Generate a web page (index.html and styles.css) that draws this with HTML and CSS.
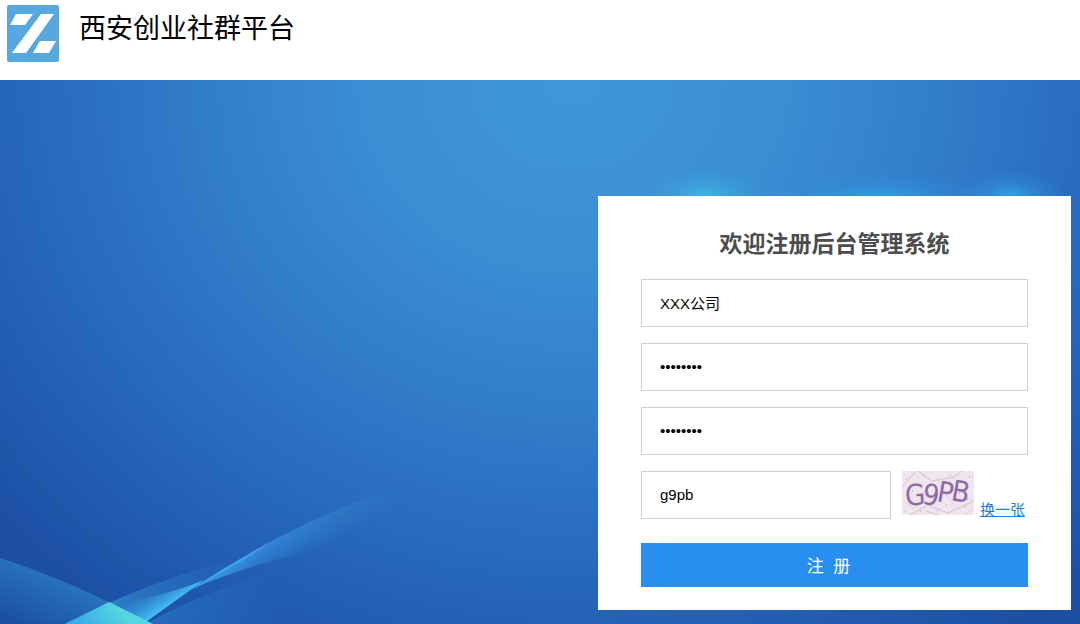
FILE: index.html
```html
<!DOCTYPE html>
<html lang="zh-CN">
<head>
    <meta charset="UTF-8">
    <meta name="viewport" content="width=device-width, initial-scale=1.0">
    <title>西安创业社群平台</title>
    <link rel="stylesheet" href="styles.css">
</head>
<body>

    <!-- Header -->
    <header class="header">
        <svg class="logo" viewBox="0 0 52 57" aria-hidden="true">
            <rect width="52" height="57" rx="2" fill="#58a8e0"/>
            <path d="M9 9H26L18 20H3Z" fill="#fff"/>
            <path d="M34 9H47L19 48H5Z" fill="#fff"/>
            <path d="M33 36H49L42 48H26Z" fill="#fff"/>
        </svg>
        <h1 class="site-name">西安创业社群平台</h1>
    </header>

    <main class="main">
        <!-- Light beams behind the form -->
        <svg class="beams" viewBox="0 0 1080 544" preserveAspectRatio="xMinYMax slice" aria-hidden="true">
            <defs>
                <linearGradient id="left" gradientUnits="userSpaceOnUse" x1="65" y1="502" x2="42" y2="556">
                    <stop offset="0" stop-color="#3596d4" stop-opacity=".5"/>
                    <stop offset="1" stop-color="#3596d4" stop-opacity="0"/>
                </linearGradient>
                <linearGradient id="arc" gradientUnits="userSpaceOnUse" x1="90" y1="530" x2="240" y2="478">
                    <stop offset="0" stop-color="#38a4e2" stop-opacity=".65"/>
                    <stop offset="1" stop-color="#3588d8" stop-opacity="0"/>
                </linearGradient>
                <linearGradient id="ribbon" gradientUnits="userSpaceOnUse" x1="195" y1="507" x2="415" y2="405">
                    <stop offset="0" stop-color="#45b5f8"/>
                    <stop offset=".3" stop-color="#3790e4" stop-opacity=".9"/>
                    <stop offset=".7" stop-color="#3488d0" stop-opacity=".5"/>
                    <stop offset="1" stop-color="#3488d0" stop-opacity="0"/>
                </linearGradient>
                <linearGradient id="fade" gradientUnits="userSpaceOnUse" x1="275" y1="458" x2="289" y2="486">
                    <stop offset="0" stop-color="#fff"/>
                    <stop offset="1" stop-color="#000"/>
                </linearGradient>
                <mask id="ribbonMask" maskUnits="userSpaceOnUse" x="0" y="300" width="500" height="244">
                    <rect y="300" width="500" height="244" fill="url(#fade)"/>
                </mask>
                <linearGradient id="tail" gradientUnits="userSpaceOnUse" x1="165" y1="530" x2="150" y2="508">
                    <stop offset="0" stop-color="#45c4f8"/>
                    <stop offset="1" stop-color="#3aa8e8" stop-opacity="0"/>
                </linearGradient>
                <linearGradient id="lower" gradientUnits="userSpaceOnUse" x1="150" y1="540" x2="275" y2="500">
                    <stop offset="0" stop-color="#2f86d0" stop-opacity=".5"/>
                    <stop offset="1" stop-color="#2f86d0" stop-opacity="0"/>
                </linearGradient>
                <linearGradient id="cross" gradientUnits="userSpaceOnUse" x1="85" y1="544" x2="115" y2="522">
                    <stop offset="0" stop-color="#3ab0e6"/>
                    <stop offset="1" stop-color="#56d6e0"/>
                </linearGradient>
                <radialGradient id="glow">
                    <stop offset="0" stop-color="#3cb8e4"/>
                    <stop offset=".5" stop-color="#3cb0e2" stop-opacity=".4"/>
                    <stop offset="1" stop-color="#3cb0e2" stop-opacity="0"/>
                </radialGradient>
                <radialGradient id="glowBlue">
                    <stop offset="0" stop-color="#2fa2e4"/>
                    <stop offset=".5" stop-color="#2f98e0" stop-opacity=".4"/>
                    <stop offset="1" stop-color="#2f94e0" stop-opacity="0"/>
                </radialGradient>
            </defs>
            <path d="M0 478Q55 496 109 522L153 544H0Z" fill="url(#left)"/>
            <path d="M65 544Q150 500 240 478L195 507L143 544Z" fill="url(#arc)"/>
            <path d="M146 544Q200 512 290 488L300 544Z" fill="url(#lower)"/>
            <path d="M190 510Q310 430 430 398V450Q280 470 190 510Z" fill="url(#ribbon)" mask="url(#ribbonMask)"/>
            <path d="M193 508Q230 484 270 462Q240 484 193 508Z" fill="#45b0f6" opacity=".6"/>
            <path d="M109 522Q155 520 204 500L193 508L143 544Z" fill="url(#tail)"/>
            <path d="M65 544L109 522L153 544Z" fill="url(#cross)"/>
            <ellipse cx="705" cy="116" rx="60" ry="26" fill="url(#glow)"/>
            <ellipse cx="880" cy="118" rx="110" ry="26" fill="url(#glowBlue)"/>
            <ellipse cx="1010" cy="116" rx="55" ry="26" fill="url(#glowBlue)"/>
        </svg>

        <!-- Register form -->
        <form class="card">
            <h2 class="title">欢迎注册后台管理系统</h2>
            <input class="field" type="text" aria-label="公司名称" value="XXX公司">
            <input class="field" type="password" aria-label="密码" value="12345678">
            <input class="field" type="password" aria-label="确认密码" value="12345678">
            <div class="captcha-row">
                <input class="field" type="text" aria-label="验证码" value="g9pb">
                <svg class="captcha" viewBox="0 0 72 44" role="img" aria-label="验证码图片">
                    <rect width="72" height="44" fill="#f0e4ee"/>
                    <g fill="none" stroke="#cfc4cc" stroke-width="1">
                        <path d="M0 16L14 0M8 44L26 34L46 42L72 30M16 0L30 10L52 6L60 0M24 40L36 44"/>
                        <path d="M2 30L12 38M40 20L58 40M62 44L72 38M34 6L46 26" stroke="#e2d3de"/>
                    </g>
                    <path d="M4 8h1M10 20h1M7 33h1M21 4h1M26 22h1M35 40h1M44 34h1M54 30h1M62 36h1M67 6h1M48 4h1M31 28h1M18 40h1M57 22h1M3 40h1M65 28h1" stroke="#a98dae"/>
                    <g class="captcha-text">
                        <text x="3" y="34" transform="rotate(-4 14 22)">G</text>
                        <text x="21" y="34" transform="rotate(8 30 22)">9</text>
                        <text x="36" y="32" transform="rotate(10 46 20)">P</text>
                        <text x="50" y="31" transform="rotate(10 60 20)">B</text>
                    </g>
                </svg>
                <a class="refresh" href="#">换一张</a>
            </div>
            <button class="submit" type="submit">注&nbsp;&nbsp;册</button>
        </form>
    </main>

</body>
</html>
```
FILE: styles.css
```css
* {
    box-sizing: border-box;
}

body {
    display: flex;
    flex-direction: column;
    min-height: 100vh;
    margin: 0;
    font-family: "Liberation Sans", "Noto Sans CJK SC", sans-serif;
    background-color: #fff;
}

.header {
    display: flex;
    align-items: flex-start;
    gap: 20px;
    padding: 5px 7px 18px;
}

.logo {
    width: 52px;
    height: 57px;
}

.site-name {
    margin: 0;
    font-family: "Noto Sans CJK SC", sans-serif;
    font-size: 27px;
    font-weight: 400;
    line-height: 44px;
    color: #000;
}

.main {
    position: relative;
    display: flex;
    flex: 1;
    align-items: flex-end;
    justify-content: flex-end;
    padding: 24px 9px 14px;
    /* bright spot at the top, darker towards the corners */
    background: radial-gradient(ellipse 70% 125% at 53% 0, #3f98d9 0%, #3a8ed2 28%, #2f77c6 56%, #225eb1 84%, #1b4fa4 100%);
}

.beams {
    position: absolute;
    top: 0;
    left: 0;
    width: 100%;
    height: 100%;
}

.card {
    position: relative;
    display: flex;
    flex-direction: column;
    gap: 16px;
    width: 100%;
    max-width: 473px;
    padding: 32px 43px 23px;
    background-color: #fff;
}

.title {
    margin: 0 0 3px;
    font-size: 23px;
    line-height: 32px;
    text-align: center;
    color: #4d4d4d;
}

.field {
    width: 100%;
    min-width: 0;
    height: 48px;
    padding: 0 18px 2px;
    border: 1px solid #d0d0d0;
    border-radius: 0;
    font-family: inherit;
    font-size: 15px;
    color: #000;
    background-color: #fff;
}

.captcha-row {
    display: flex;
    align-items: flex-start;
}

.captcha-row .field {
    flex: 1;
}

.captcha {
    width: 72px;
    height: 44px;
    margin-left: 11px;
}

.captcha-text {
    font-family: "Liberation Sans Narrow", "DejaVu Sans Condensed", sans-serif;
    font-size: 29px;
    fill: #8f6aa6;
}

.refresh {
    align-self: flex-end;
    margin: 0 3px 0 6px;
    font-size: 15px;
    line-height: 18px;
    color: #1e80d8;
}

.submit {
    height: 44px;
    margin-top: 8px;
    padding: 0 16px 2px 4px;
    border: none;
    font-family: inherit;
    font-size: 17px;
    color: #fff;
    background-color: #288ff0;
    cursor: pointer;
}

.submit:hover {
    background-color: #1f82e0;
}
```
